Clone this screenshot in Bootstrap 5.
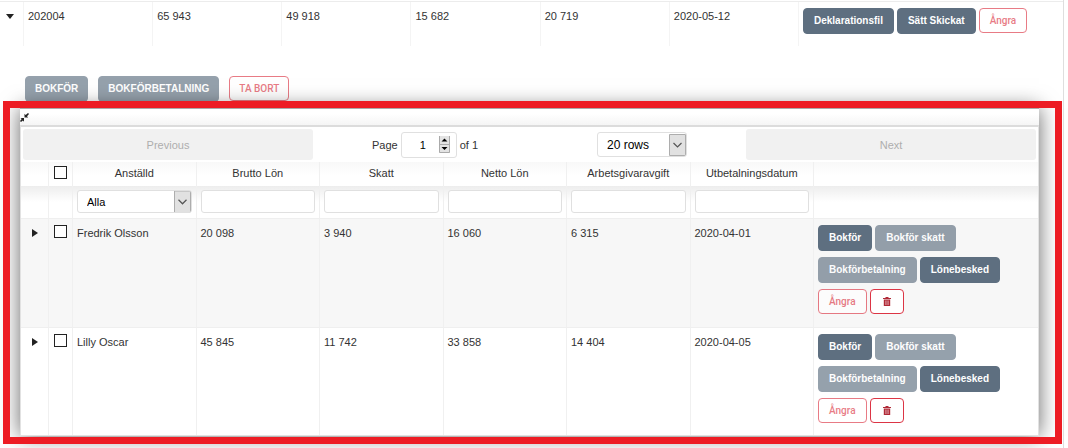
<!DOCTYPE html>
<html lang="sv">
<head>
<meta charset="utf-8">
<meta name="viewport" content="width=device-width, initial-scale=1">
<title>Löner</title>
<link rel="stylesheet" href="https://cdn.jsdelivr.net/npm/bootstrap@5.3.0/dist/css/bootstrap.min.css">
<style>
  body { font: 11px/16px "Liberation Sans", Arial, sans-serif; color: #333; background: #fff; overflow-x: hidden; }
  .period-list { border-right: 1px solid #dedede; margin-right: 4px; padding-top: 1px; min-height: 100vh; }
  table { table-layout: fixed; width: 100%; border-collapse: separate; border-spacing: 0; }
  .outer-table td { height: 44px; padding: 6px 5px 0 4px; vertical-align: top; border-left: 1px solid #f4f4f4; }
  .outer-table td:first-child { border-left: 0; padding: 12px 0 0 6px; }
  .outer-table { border-top: 1px solid #ececec; }
  .arrow-toggle { display: block; border: 0; padding: 0; background: none; line-height: 0; }
  .btn { font: bold 10px/14px "Liberation Sans", Arial, sans-serif; padding: 5px 10px; border-radius: 4px; border-width: 1px; white-space: nowrap; }
  .btn-slate, .btn-slate:hover { background: #5e6f80; border-color: #5e6f80; color: #fff; }
  .btn.btn-slate:disabled { background: #5e6f80; border-color: #5e6f80; color: #fff; opacity: .65; }
  .btn-remove { font: 500 10px/14px Roboto, "Liberation Sans", sans-serif; background: #fff; border-color: #dc3545; color: #dc3545; padding: 5px 10px 4px; }
  .btn-remove:disabled { border-color: #dc3545; color: #dc3545; opacity: .65; background: #fff; }
  .btn-trash { width: 34px; height: 25px; padding: 0; line-height: 0; }
  .batch-bar { padding: 30px 0 0 25px; height: 55px; gap: 10px; }
  .batch-bar .btn { padding-left: 9px; padding-right: 9px; }
  .payslip-frame { position: relative; margin: 0 1px 0 3px; padding: 7px 23px 8px 17px; }
  .payslip-frame::after { content: ""; position: absolute; inset: 0; border: 7px solid #ed1c24; z-index: 3; pointer-events: none; }
  .payslip-panel { background: #fff; box-shadow: 0 0 20px rgba(0,0,0,.6); border-top: 1px solid #aaa; }
  .panel-bar { height: 16px; background: linear-gradient(#fff 30%, #f5f5f5); line-height: 0; padding-top: 4px; }
  .panel-body { border: 1px solid #e2e2e2; border-top: 2px solid #dcdcdc; }
  .pager { padding: 2px; height: 35px; gap: 3px; }
  .pager-step { width: 290px; height: 31px; flex: 0 1 290px; border: 0; border-radius: 3px; background: #f1f1f1; color: #aeaeae; }
  .pager-middle { padding: 0 56px; }
  .pager-page { gap: 3px; }
  .field { border: 1px solid #e0e0e0; border-radius: 3px; background-color: #fff; color: #000; font: 11px/16px "Liberation Sans", Arial, sans-serif; }
  .field-page { width: 56px; height: 26px; padding: 0 18px 0 6px; text-align: center; appearance: textfield; background: url("data:image/svg+xml,%3Csvg xmlns='http://www.w3.org/2000/svg' width='11' height='17'%3E%3Cpath fill='%23e3e3e3' d='M0 0h11v17H0z'/%3E%3Cpath fill='none' stroke='%23aaa' d='M.5 0v16.500h10V0M0 8.500h11'/%3E%3Cpath d='M2.500 5.500h6l-3-3zM2.500 11h6l-3 3z'/%3E%3C/svg%3E") no-repeat right 6px center #fff; }
  .field-page::-webkit-inner-spin-button { appearance: none; }
  select.field { appearance: none; padding: 0 20px 0 9px; background: url("data:image/svg+xml,%3Csvg xmlns='http://www.w3.org/2000/svg' width='17' height='22'%3E%3Cpath fill='%23e1e1e1' stroke='%23adadad' d='M.5.5h16v21H.5z'/%3E%3Cpath fill='none' stroke='%23555' stroke-width='1.200' d='M4.500 9l4 4 4-4'/%3E%3C/svg%3E") no-repeat right center #fff; }
  .field-rows { width: 90px; height: 25px; }
  select.field.field-rows { font-size: 12px; }
  .col-filter { display: block; width: 100%; height: 23px; }
  .slips th { font-weight: 400; text-align: center; height: 24px; padding: 0 4px 2px; background: linear-gradient(#f8f8f8, #fff 14px); }
  .slips th, .slips td { border-right: 1px solid #f0f0f0; }
  .slips tr > :last-child { border-right: 0; }
  .slips .filters td { height: 32px; padding: 4px 4px 5px; background: linear-gradient(#ededed, #fff 16px); }
  .slips tbody td { height: 109px; padding: 6px 4px 10px; vertical-align: top; border-top: 1px solid #efefef; }
  .slips tbody tr:nth-child(odd) td { background: #f7f7f7; }
  .slips tbody tr:nth-child(even) td { height: 108px; }
  .slips tbody td:first-child { padding: 10px 0 0 11px; }
  .slips .pick { padding: 6px 0 0; text-align: center; line-height: 0; }
  .slips th.pick { padding: 0 0 3px; }
  .tick { appearance: none; width: 13px; height: 13px; margin: 0; border: 1px solid #222; background: #fff; }
  .tick:checked { background: #5e6f80; }
  .row-actions { column-gap: 3px; row-gap: 6px; }
</style>
</head>
<body>
<main class="period-list">
  <table class="outer-table">
    <colgroup><col style="width:23px"><col><col><col><col><col><col><col style="width:265px"></colgroup>
    <tbody><tr>
      <td><button class="arrow-toggle" aria-label="Fäll ihop"><svg width="8" height="5"><path d="M0 0h8L4 5z" fill="#222"/></svg></button></td>
      <td>202004</td><td>65 943</td><td>49 918</td><td>15 682</td><td>20 719</td><td>2020-05-12</td>
      <td><div class="d-flex align-items-start row-actions">
        <button class="btn btn-slate">Deklarationsfil</button><button class="btn btn-slate">Sätt Skickat</button><button class="btn btn-remove" disabled>Ångra</button>
      </div></td>
    </tr></tbody>
  </table>

  <div class="batch-bar d-flex align-items-start">
    <button class="btn btn-slate" disabled>BOKFÖR</button>
    <button class="btn btn-slate" disabled>BOKFÖRBETALNING</button>
    <button class="btn btn-remove" disabled>TA BORT</button>
  </div>

  <section class="payslip-frame">
    <div class="payslip-panel">
      <div class="panel-bar"><button class="arrow-toggle" aria-label="Minimera"><svg width="9" height="9" viewBox="0 0 9 9"><path d="M4.500 4.500V.8L5.700 2 8 0l1 1-2 2.200 1.200 1.300zM4 5v3.700L2.900 7.500 1 9 0 8l1.700-1.900L.5 5z" fill="#222"/></svg></button></div>
      <div class="panel-body">
        <div class="pager d-flex align-items-center">
          <button class="pager-step" disabled>Previous</button>
          <div class="pager-middle d-flex flex-fill justify-content-between align-items-center">
            <div class="pager-page d-flex align-items-center"><label for="page">Page</label><input class="field field-page" type="number" id="page" value="1"><span>of 1</span></div>
            <select class="field field-rows" aria-label="Rader per sida"><option>20 rows</option><option>50 rows</option></select>
          </div>
          <button class="pager-step" disabled>Next</button>
        </div>
        <table class="slips">
          <colgroup><col style="width:28px"><col style="width:24px"><col><col><col><col><col><col><col style="width:224px"></colgroup>
          <thead>
            <tr><th></th><th class="pick"><input class="tick" type="checkbox" aria-label="Välj alla"></th><th>Anställd</th><th>Brutto Lön</th><th>Skatt</th><th>Netto Lön</th><th>Arbetsgivaravgift</th><th>Utbetalningsdatum</th><th></th></tr>
            <tr class="filters"><td></td><td></td>
              <td><select class="field col-filter" aria-label="Anställd"><option>Alla</option></select></td>
              <td><input class="field col-filter" type="text" aria-label="Brutto Lön"></td>
              <td><input class="field col-filter" type="text" aria-label="Skatt"></td>
              <td><input class="field col-filter" type="text" aria-label="Netto Lön"></td>
              <td><input class="field col-filter" type="text" aria-label="Arbetsgivaravgift"></td>
              <td><input class="field col-filter" type="text" aria-label="Utbetalningsdatum"></td><td></td></tr>
          </thead>
          <tbody>
            <tr>
              <td><button class="arrow-toggle" aria-label="Visa mer"><svg width="6" height="8"><path d="M0 0v8l6-4z" fill="#222"/></svg></button></td>
              <td class="pick"><input class="tick" type="checkbox" aria-label="Välj Fredrik Olsson"></td>
              <td>Fredrik Olsson</td><td>20 098</td><td>3 940</td><td>16 060</td><td>6 315</td><td>2020-04-01</td>
              <td><div class="d-flex flex-wrap row-actions">
                <button class="btn btn-slate">Bokför</button><button class="btn btn-slate" disabled>Bokför skatt</button>
                <button class="btn btn-slate" disabled>Bokförbetalning</button><button class="btn btn-slate">Lönebesked</button>
                <button class="btn btn-remove" disabled>Ångra</button><button class="btn btn-remove btn-trash" aria-label="Ta bort"><svg width="8" height="9" viewBox="0 0 8 9"><path d="M0 1h2.500V0h3v1H8v1H0z" fill="#b02a37"/><path d="M.8 2.500h6.400V9H.8z" fill="#b02a37"/><path d="M2.700 3.500V8M4 3.500V8M5.300 3.500V8" stroke="#edc5c9" stroke-width=".6"/></svg></button>
              </div></td>
            </tr>
            <tr>
              <td><button class="arrow-toggle" aria-label="Visa mer"><svg width="6" height="8"><path d="M0 0v8l6-4z" fill="#222"/></svg></button></td>
              <td class="pick"><input class="tick" type="checkbox" aria-label="Välj Lilly Oscar"></td>
              <td>Lilly Oscar</td><td>45 845</td><td>11 742</td><td>33 858</td><td>14 404</td><td>2020-04-05</td>
              <td><div class="d-flex flex-wrap row-actions">
                <button class="btn btn-slate">Bokför</button><button class="btn btn-slate" disabled>Bokför skatt</button>
                <button class="btn btn-slate" disabled>Bokförbetalning</button><button class="btn btn-slate">Lönebesked</button>
                <button class="btn btn-remove" disabled>Ångra</button><button class="btn btn-remove btn-trash" aria-label="Ta bort"><svg width="8" height="9" viewBox="0 0 8 9"><path d="M0 1h2.500V0h3v1H8v1H0z" fill="#b02a37"/><path d="M.8 2.500h6.400V9H.8z" fill="#b02a37"/><path d="M2.700 3.500V8M4 3.500V8M5.300 3.500V8" stroke="#edc5c9" stroke-width=".6"/></svg></button>
              </div></td>
            </tr>
          </tbody>
        </table>
      </div>
    </div>
  </section>
</main>
<script src="https://cdn.jsdelivr.net/npm/bootstrap@5.3.0/dist/js/bootstrap.bundle.min.js"></script>
</body>
</html>
